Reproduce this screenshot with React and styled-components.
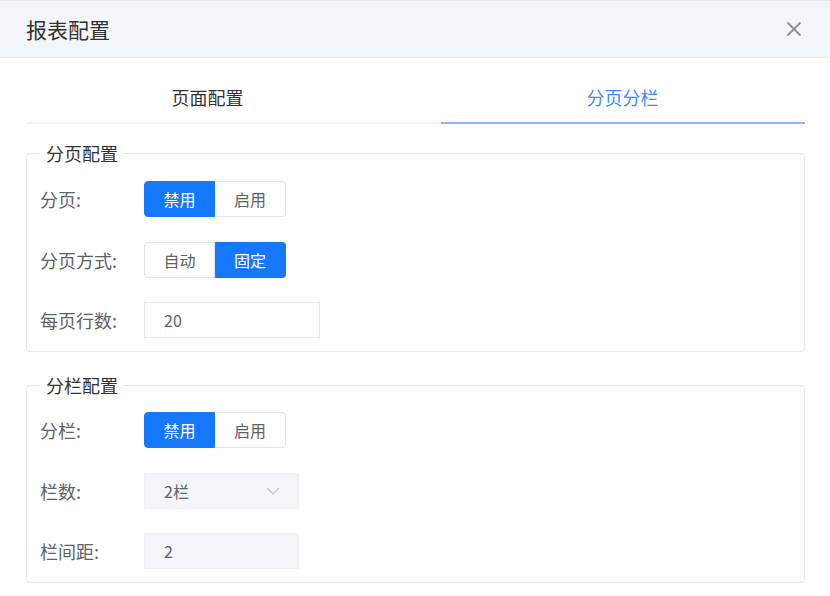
import React, { useState } from 'react';
import styled, { createGlobalStyle } from 'styled-components';

const GlobalStyle = createGlobalStyle`
  html, body {
    margin: 0;
    padding: 0;
    background: #ffffff;
    font-family: "Noto Sans CJK SC", "Noto Sans", "Liberation Sans", sans-serif;
  }
`;

const Dialog = styled.div`
  width: 830px;
  height: 596px;
  overflow: hidden;
  background: #ffffff;
`;

const Header = styled.div`
  height: 56px;
  display: flex;
  align-items: center;
  justify-content: space-between;
  padding: 0 28px 0 26px;
  background: #f3f6f9;
  border-top: 1px solid #e6e9ee;
  border-bottom: 1px solid #e8ebf0;
`;

const Title = styled.div`
  font-size: 21px;
  color: #333333;
  line-height: 28px;
`;

const Close = styled.button`
  border: none;
  background: transparent;
  padding: 0;
  width: 16px;
  height: 16px;
  display: flex;
  align-items: center;
  justify-content: center;
  cursor: pointer;
`;

const Tabs = styled.div`
  display: flex;
`;

const Tab = styled.div`
  flex: 1;
  text-align: center;
  font-size: 18px;
  line-height: 26px;
  padding: 26px 0 12px;
  color: ${(p) => (p.active ? '#3b8bff' : '#333333')};
  cursor: pointer;
`;

const TabLine = styled.div`
  display: flex;
  height: 2px;
  margin: 0 25px 0 26px;
  background: #f2f3f5;
`;

const Ink = styled.div`
  height: 2px;
  margin-left: ${(p) => p.offset}px;
  flex: 1;
  background: #8db5f7;
`;

const Body = styled.div`
  padding: 0 25px 0 26px;
`;

const Fieldset = styled.fieldset`
  margin: ${(p) => p.gap}px 0 0;
  padding: 0 13px 13px;
  border: 1px solid #e4e7ed;
  border-radius: 4px;
  min-width: 0;
`;

const Legend = styled.legend`
  padding: 0 6px;
  font-size: 18px;
  line-height: 22px;
  color: #333333;
`;

const Rows = styled.div`
  display: flex;
  flex-direction: column;
  gap: ${(p) => p.gap}px;
  padding-top: ${(p) => p.top}px;
`;

const Row = styled.div`
  display: flex;
  align-items: center;
  height: 36px;
`;

const Label = styled.div`
  width: 104px;
  font-size: 18px;
  color: #606266;
`;

const Group = styled.div`
  display: flex;
  height: 36px;
`;

const Seg = styled.button`
  width: 71px;
  height: 36px;
  font-family: inherit;
  font-size: 16px;
  padding: 0;
  cursor: pointer;
  border: 1px solid ${(p) => (p.active ? '#1677ff' : '#e2e5ea')};
  background: ${(p) => (p.active ? '#1677ff' : '#ffffff')};
  color: ${(p) => (p.active ? '#ffffff' : '#606266')};
  &:first-child {
    border-radius: 4px 0 0 4px;
  }
  &:last-child {
    border-radius: 0 4px 4px 0;
  }
  & + & {
    border-left: none;
  }
`;

const Input = styled.input`
  box-sizing: border-box;
  width: ${(p) => p.w}px;
  height: 36px;
  padding: 0 19px;
  font-family: inherit;
  font-size: 16px;
  color: #606266;
  border: 1px solid ${(p) => (p.disabled ? '#eef0f3' : '#e4e7ed')};
  background: ${(p) => (p.disabled ? '#f3f5f8' : '#ffffff')};
  border-radius: 0;
  outline: none;
`;

const Select = styled.div`
  box-sizing: border-box;
  width: 155px;
  height: 36px;
  padding: 0 18px 0 19px;
  display: flex;
  align-items: center;
  justify-content: space-between;
  font-size: 16px;
  color: #606266;
  border: 1px solid #eef0f3;
  background: #f3f5f8;
`;

function Toggle({ options, value, onChange }) {
  return (
    <Group>
      {options.map((o, i) => (
        <Seg key={o} active={value === i} onClick={() => onChange(i)}>
          {o}
        </Seg>
      ))}
    </Group>
  );
}

export default function App() {
  const [tab, setTab] = useState(1);
  const [paging, setPaging] = useState(0);
  const [mode, setMode] = useState(1);
  const [cols, setCols] = useState(0);

  return (
    <Dialog>
      <GlobalStyle />
      <Header>
        <Title>报表配置</Title>
        <Close>
          <svg width="16" height="16" viewBox="0 0 16 16">
            <path d="M1.5 1.5 L14.5 14.5 M14.5 1.5 L1.5 14.5" stroke="#8c8f94" strokeWidth="1.8" fill="none" />
          </svg>
        </Close>
      </Header>
      <Tabs>
        <Tab active={tab === 0} onClick={() => setTab(0)}>页面配置</Tab>
        <Tab active={tab === 1} onClick={() => setTab(1)}>分页分栏</Tab>
      </Tabs>
      <TabLine>
        <Ink offset={tab === 1 ? 415 : 0} />
      </TabLine>
      <Body>
        <Fieldset gap={18}>
          <Legend>分页配置</Legend>
          <Rows gap={24.5} top={17}>
            <Row>
              <Label>分页:</Label>
              <Toggle options={['禁用', '启用']} value={paging} onChange={setPaging} />
            </Row>
            <Row>
              <Label>分页方式:</Label>
              <Toggle options={['自动', '固定']} value={mode} onChange={setMode} />
            </Row>
            <Row>
              <Label>每页行数:</Label>
              <Input w={176} defaultValue="20" />
            </Row>
          </Rows>
        </Fieldset>

        <Fieldset gap={22}>
          <Legend>分栏配置</Legend>
          <Rows gap={24.5} top={16}>
            <Row>
              <Label>分栏:</Label>
              <Toggle options={['禁用', '启用']} value={cols} onChange={setCols} />
            </Row>
            <Row>
              <Label>栏数:</Label>
              <Select>
                <span>2栏</span>
                <svg width="14" height="8" viewBox="0 0 14 8">
                  <path d="M1 1 L7 7 L13 1" stroke="#c0c4cc" strokeWidth="1.2" fill="none" />
                </svg>
              </Select>
            </Row>
            <Row>
              <Label>栏间距:</Label>
              <Input w={155} disabled defaultValue="2" />
            </Row>
          </Rows>
        </Fieldset>
      </Body>
    </Dialog>
  );
}
